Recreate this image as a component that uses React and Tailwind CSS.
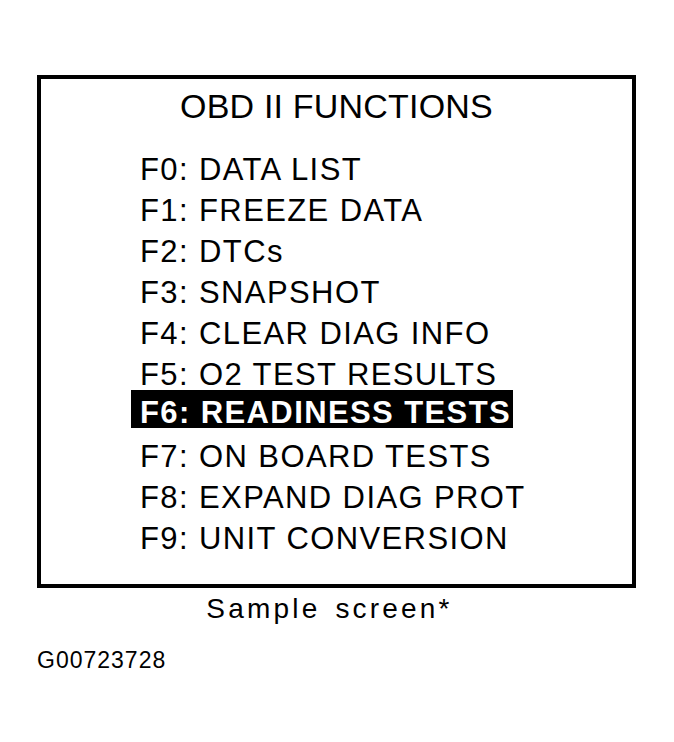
import React from 'react'

const ITEMS = [
  'F0: DATA LIST',
  'F1: FREEZE DATA',
  'F2: DTCs',
  'F3: SNAPSHOT',
  'F4: CLEAR DIAG INFO',
  'F5: O2 TEST RESULTS',
  'F6: READINESS TESTS',
  'F7: ON BOARD TESTS',
  'F8: EXPAND DIAG PROT',
  'F9: UNIT CONVERSION',
]

const SELECTED = 6

export default function App() {
  return (
    <div className="min-h-screen bg-white text-black pt-[75px] pl-[37px]" style={{ fontFamily: '"Liberation Sans", Arial, sans-serif' }}>
      <div className="w-[599px] h-[513px] border-4 border-black flex flex-col">
        <div className="text-center text-[34px] leading-[34px] pt-[10px] tracking-[0.2px]">OBD II FUNCTIONS</div>
        <div className="flex flex-col items-start pl-[90px] pt-[26px] text-[31px] tracking-[1.4px]">
          {ITEMS.map((item, i) =>
            i === SELECTED ? (
              <div key={i} className="bg-black text-white font-bold h-[38px] -mt-[5px] mb-[8px] leading-[46px] pl-[9px] pr-[2px] whitespace-nowrap">
                {item}
              </div>
            ) : (
              <div key={i} className="h-[41px] leading-[41px] pl-[9px] whitespace-nowrap">
                {item}
              </div>
            )
          )}
        </div>
      </div>
      <div className="w-[585px] text-center text-[28px] leading-[34px] pt-[4px] tracking-[3.2px] [word-spacing:4px]">Sample screen*</div>
      <div className="text-[23px] leading-[24px] pt-[22px] tracking-[1px]">G00723728</div>
    </div>
  )
}
